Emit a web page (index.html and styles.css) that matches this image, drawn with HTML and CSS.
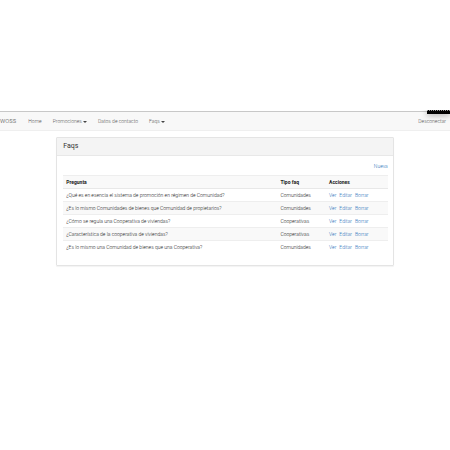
FILE: index.html
```html
<!DOCTYPE html>
<html lang="es">
  <head>
    <meta charset="UTF-8" />
    <meta name="viewport" content="width=device-width, initial-scale=1.0" />
    <title>Faqs</title>
    <link rel="stylesheet" href="styles.css">
  </head>
  <body>
    <!-- barra de navegación -->
    <nav class="navbar">
      <a class="brand" href="#">woss</a>
      <ul class="menu">
        <li><a href="#">Home</a></li>
        <li><a href="#">Promociones <span class="caret"></span></a></li>
        <li><a href="#">Datos de contacto</a></li>
        <li><a href="#">Faqs <span class="caret"></span></a></li>
      </ul>
      <a class="logout" href="#">Desconectar</a>
      <span class="tag"></span>
    </nav>

    <!-- listado de faqs -->
    <main class="panel">
      <h1 class="panel-heading">Faqs</h1>
      <div class="panel-body">
        <a class="new" href="#">Nueva</a>
        <table class="table">
          <thead>
            <tr>
              <th class="col-question">Pregunta</th>
              <th class="col-type">Tipo faq</th>
              <th>Acciones</th>
            </tr>
          </thead>
          <tbody>
            <tr>
              <td>¿Qué es en esencia el sistema de promoción en régimen de Comunidad?</td>
              <td>Comunidades</td>
              <td><div class="actions"><a href="#">Ver</a><a href="#">Editar</a><a href="#">Borrar</a></div></td>
            </tr>
            <tr>
              <td>¿Es lo mismo Comunidades de bienes que Comunidad de propietarios?</td>
              <td>Comunidades</td>
              <td><div class="actions"><a href="#">Ver</a><a href="#">Editar</a><a href="#">Borrar</a></div></td>
            </tr>
            <tr>
              <td>¿Cómo se regula una Cooperativa de viviendas?</td>
              <td>Cooperativas</td>
              <td><div class="actions"><a href="#">Ver</a><a href="#">Editar</a><a href="#">Borrar</a></div></td>
            </tr>
            <tr>
              <td>¿Característica de la cooperativa de viviendas?</td>
              <td>Cooperativas</td>
              <td><div class="actions"><a href="#">Ver</a><a href="#">Editar</a><a href="#">Borrar</a></div></td>
            </tr>
            <tr>
              <td>¿Es lo mismo una Comunidad de bienes que una Cooperativa?</td>
              <td>Comunidades</td>
              <td><div class="actions"><a href="#">Ver</a><a href="#">Editar</a><a href="#">Borrar</a></div></td>
            </tr>
          </tbody>
        </table>
      </div>
    </main>
  </body>
</html>
```
FILE: styles.css
```css
* {
  margin: 0;
  padding: 0;
  box-sizing: border-box;
}

body {
  padding-top: 111px;
  background-color: #fff;
  color: #222;
  font-family: Roboto, "Liberation Sans", sans-serif;
  font-size: 5px;
  font-weight: 300;
  line-height: 6px;
}
a {
  color: #1f70b8;
  text-decoration: none;
}
a:hover {
  text-decoration: underline;
}

/* navbar */
.navbar {
  position: relative;
  display: flex;
  align-items: center;
  height: 20px;
  padding-right: 4px;
  background-color: #f8f8f8;
  border-top: 1px solid #c8c8c8;
  border-bottom: 1px solid #efefef;
  clip-path: inset(-1px 0 0 0);
}
.navbar a {
  color: #555;
}
.navbar .brand {
  font-size: 7px;
}
.menu {
  display: flex;
  gap: 11px;
  margin-left: 12px;
  list-style: none;
}
.caret {
  display: inline-block;
  vertical-align: middle;
  border-top: 2px solid #444;
  border-left: 2px solid transparent;
  border-right: 2px solid transparent;
}
.logout {
  margin-left: auto;
}
.tag {
  position: absolute;
  top: -2px;
  right: 0;
  width: 23px;
  height: 4px;
  background-color: #000;
  border-top: 1px dotted #999;
  box-shadow: 0 1px 6px rgba(0, 0, 0, 0.4);
}

/* panel */
.panel {
  width: 75%;
  margin: 6px auto;
  border: 1px solid #e4e4e4;
  border-radius: 1px;
  box-shadow: 0 1px 1px rgba(0, 0, 0, 0.05);
}
.panel-heading {
  padding: 4px 6px;
  background-color: #f4f4f4;
  border-bottom: 1px solid #e8e8e8;
  color: #333;
  font-size: 7px;
  font-weight: 400;
  line-height: 9px;
}
.panel-body {
  padding: 7px 5px 12px 6px;
}
.new {
  display: block;
  margin-bottom: 6px;
  text-align: right;
}

/* table */
.table {
  width: 100%;
  table-layout: fixed;
  border-collapse: collapse;
  text-align: left;
}
.table th,
.table td {
  padding: 3px;
  border-top: 1px solid #eee;
}
.table th {
  background-color: #f9f9f9;
  border-bottom: 1px solid #e8e8e8;
  color: #222;
  font-weight: 700;
}
.table tbody tr:nth-child(even) {
  background-color: #f9f9f9;
}
.col-question {
  width: 66%;
}
.col-type {
  width: 15%;
}
.actions {
  display: flex;
  gap: 3px;
}
```
